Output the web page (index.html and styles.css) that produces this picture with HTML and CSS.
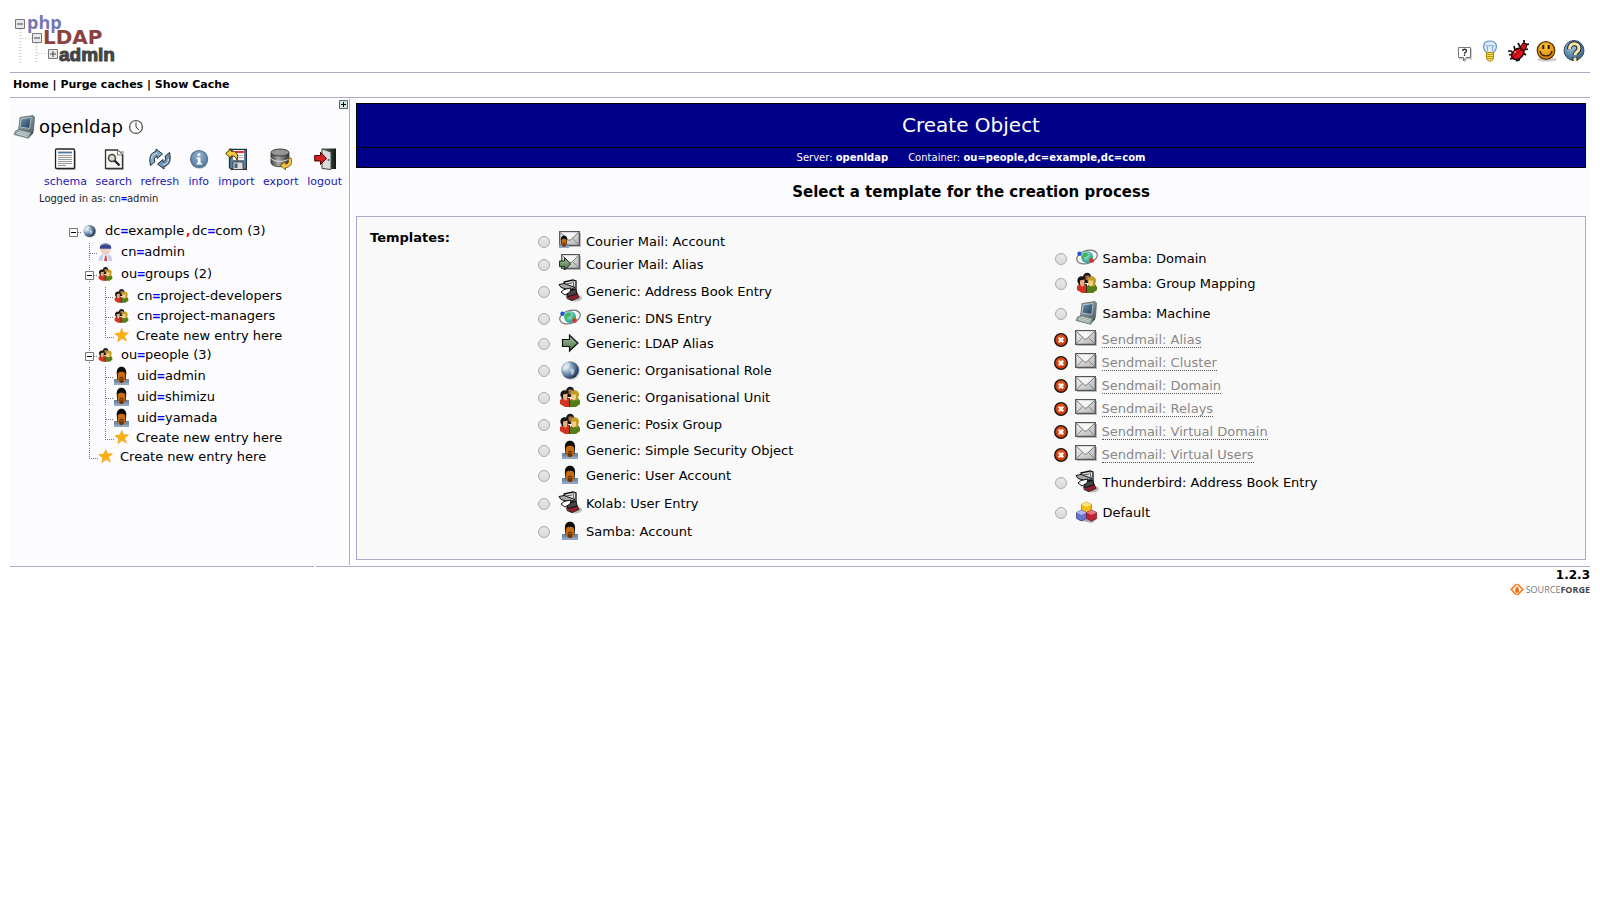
FILE: index.html
```html
<!DOCTYPE html>
<html lang="en">
<head>
<meta charset="utf-8">
<title>phpLDAPadmin</title>
<link rel="stylesheet" href="styles.css">
</head>
<body>
<svg class="defs" aria-hidden="true">
  <defs>
    <linearGradient id="g-steel" x1="0" y1="0" x2="1" y2="1"><stop offset="0" stop-color="#f4f4f4"/><stop offset="1" stop-color="#b4b4b4"/></linearGradient>
    <linearGradient id="g-green" x1="0" y1="0" x2="0" y2="1"><stop offset="0" stop-color="#a9c7a3"/><stop offset="1" stop-color="#456b42"/></linearGradient>
    <linearGradient id="g-screen" x1="0" y1="0" x2="1" y2="1"><stop offset="0" stop-color="#6c93b4"/><stop offset="1" stop-color="#1d3c58"/></linearGradient>
    <linearGradient id="g-case" x1="0" y1="0" x2="1" y2="1"><stop offset="0" stop-color="#a9b8ba"/><stop offset="1" stop-color="#4c5c60"/></linearGradient>
    <radialGradient id="g-globe" cx=".3" cy=".35" r=".75"><stop offset="0" stop-color="#e8f1f6"/><stop offset=".45" stop-color="#7f9dba"/><stop offset="1" stop-color="#16294a"/></radialGradient>
    <radialGradient id="g-smile" cx=".45" cy=".3" r=".7"><stop offset="0" stop-color="#ffc93d"/><stop offset="1" stop-color="#d07a00"/></radialGradient>
    <radialGradient id="g-help" cx=".4" cy=".3" r=".8"><stop offset="0" stop-color="#a9cbe4"/><stop offset="1" stop-color="#2c5478"/></radialGradient>
    <radialGradient id="g-dns" cx=".4" cy=".35" r=".7"><stop offset="0" stop-color="#a8f2d8"/><stop offset="1" stop-color="#18909a"/></radialGradient>
    <radialGradient id="g-err" cx=".5" cy=".4" r=".6"><stop offset="0" stop-color="#f2602a"/><stop offset="1" stop-color="#c23200"/></radialGradient>
    <radialGradient id="g-info" cx=".5" cy=".3" r=".8"><stop offset="0" stop-color="#8fb0d0"/><stop offset="1" stop-color="#4b749e"/></radialGradient>
    <linearGradient id="g-disk" x1="0" y1="0" x2="1" y2="0"><stop offset="0" stop-color="#444"/><stop offset=".4" stop-color="#a5a5a5"/><stop offset="1" stop-color="#333"/></linearGradient>
    <linearGradient id="g-door" x1="0" y1="0" x2="1" y2="0"><stop offset="0" stop-color="#5d7160"/><stop offset="1" stop-color="#101a12"/></linearGradient>
  </defs>

  <symbol id="i-computer" viewBox="0 0 24 24">
    <path d="M7 2.500 20 .5l1.500 1.500L20.500 15 17 19 5.500 15.500z" fill="url(#g-case)" stroke="#4d5b5e" stroke-width=".7"/>
    <path d="M8.200 4 18 2.500 16.700 13.500 7 12z" fill="url(#g-screen)" stroke="#c0cccd" stroke-width=".8"/>
    <path d="M2.500 16 6 14.500 18.500 17.500 15.500 23.300 1 19.500z" fill="#93a3a3" stroke="#59686a" stroke-width=".7"/>
    <path d="M4 17.200 15 20M3.500 18.500 14 21.500M6 16 16 18.500" stroke="#dce4e3" stroke-width=".7"/>
    <path d="M18.500 17.500 21 14.500 20 18.500 15.500 23.300z" fill="#3e4b4e"/>
  </symbol>
  <symbol id="i-clock" viewBox="0 0 16 16"><circle cx="8" cy="8" r="6.500" fill="#fff" stroke="#555" stroke-width="1.200"/><path d="M8 3.500V8l3 3.200" fill="none" stroke="#333"/><path d="M8 2v1M8 13v1M2 8h1M13 8h1" stroke="#888"/></symbol>
  <symbol id="i-schema" viewBox="0 0 22 22"><path d="M3 3h19v19H3z" fill="#bbb"/><rect x="1.500" y="1" width="19" height="19.500" rx="1" fill="#fafafa" stroke="#222" stroke-width="1.300"/><path d="M4 4.500h14" stroke="#4e76a0" stroke-width="1.800"/><path d="M4 7.500h14M4 9.500h14M4 11.500h14M4 13.500h14M4 15.500h14M4 17.500h8" stroke="#999"/></symbol>
  <symbol id="i-search" viewBox="0 0 22 22"><path d="M4 3h17v19H4z" fill="#bbb"/><path d="M2.500 2h12l5 5v13.500h-17z" fill="#f7f7f4" stroke="#333" stroke-width="1.300"/><path d="M14.500 2v5h5" fill="#fff" stroke="#555" stroke-width=".8"/><circle cx="9" cy="10" r="3.500" fill="#d9dfcc" stroke="#444" stroke-width="1.500"/><path d="m11.500 12.500 5 5" stroke="#222" stroke-width="2.300"/></symbol>
  <symbol id="i-refresh" viewBox="0 0 22 22"><path d="M1.500 17.500C-.5 9 2 4.500 7 3.500V1l6.500 5L8 10.500V7.800C5.500 8.500 5 11 5.800 14z" fill="#86a9c5" stroke="#1e2e3c"/><path d="M20.500 4.500c2 8.500-.5 13-5.500 14V21l-6.500-5 5.500-4.500v2.700c2.500-.7 3-3.200 2.200-6.200z" fill="#7196b5" stroke="#1e2e3c"/><path d="M2.500 11C3 7 5.500 5.500 8 5.200M19.500 11c-.5 4-3 5.500-5.500 5.800" fill="none" stroke="#d6e6f2"/></symbol>
  <symbol id="i-info" viewBox="0 0 22 22"><circle cx="11.500" cy="12" r="8.800" fill="#bbb"/><circle cx="11" cy="11" r="8.500" fill="url(#g-info)" stroke="#56718c" stroke-width="1.200"/><circle cx="11" cy="6.500" r="1.500" fill="#fff"/><path d="M8.500 9.500h4v5.500H14v1.500H8.500V15h1.300v-4H8.500z" fill="#fff"/></symbol>
  <symbol id="i-import" viewBox="0 0 22 22"><path d="M4.500 1.500h17v20h-15l-2-2z" fill="#5f7f9c" stroke="#22303d" stroke-width="1.300"/><path d="M8 2h11v10H8z" fill="#f7f4ef"/><path d="M10 4h9" stroke="#d33" stroke-width="2"/><path d="M10 7.500h8M10 9.500h8" stroke="#bbb"/><path d="M8 14h10v7.500H8z" fill="#dcdcdc" stroke="#333" stroke-width=".8"/><path d="M9.500 15.500h3V20h-3z" fill="#44607b"/><path d="M.7 5.500 6 .7v2.500c5-.5 8 3 6 9.300-1-4-3-4.800-6-4.500v2.500z" fill="#f5c842" stroke="#403000"/></symbol>
  <symbol id="i-export" viewBox="0 0 22 22"><path d="M1 5v10c1.500 5 16.500 5 18 0V5z" fill="url(#g-disk)" stroke="#333" stroke-width=".8"/><ellipse cx="10" cy="4.500" rx="9" ry="3.500" fill="#959595" stroke="#333" stroke-width=".9"/><path d="M1 10c1.500 4.500 16.500 4.500 18 0" fill="none" stroke="#e5e5e5"/><path d="M21 10c2 5.500-1 9.500-5.500 9.500V22l-5-4.500 5-4v2.700c3 0 3.500-2.500 2.500-5.500z" fill="#f5cb45" stroke="#5f4600" stroke-width=".8"/></symbol>
  <symbol id="i-logout" viewBox="0 0 22 22"><path d="M8 .5h14v20.500H8z" fill="url(#g-door)"/><path d="M8 .8 17 4v17.500l-9-1z" fill="#dadada" stroke="#444"/><path d="M.7 7.500h5.800V4.200l6 6.300-6 6V13H.7z" fill="#d2201a" stroke="#400500"/><circle cx="14.500" cy="12" r="1" fill="#555"/></symbol>

  <symbol id="i-hint" viewBox="0 0 22 22"><path d="M8 8.500h13v11h-5l-3 4v-4H8z" fill="#ccc"/><path d="M7.500 7.500h12v10h-4.500l-2.500 3.500v-3.500h-5z" fill="#fff" stroke="#777"/><path d="M11.500 11c0-2.300 4-2.300 4-.3 0 1.500-2 1.300-2 3M13.500 14.500V16" fill="none" stroke="#222" stroke-width="1.300"/></symbol>
  <symbol id="i-bulb" viewBox="0 0 22 22"><path d="M7.500 12.500C3 8 3.500 1 11 1s8 7 3.500 11.500z" fill="#dcebfb" stroke="#5f8bc4" stroke-width="1.200"/><path d="M8.500 11V7L7 5.500l2 .7L11 5l2 1.200 2-.7L13.500 7v4" fill="none" stroke="#7ea6d9"/><path d="M7.500 12.500h7v6l-2 2.500h-3l-2-2.500z" fill="#ffe164" stroke="#a98600"/><path d="M7.500 14.500h7M7.500 16.500h7M8 18.500h6" stroke="#b89500"/></symbol>
  <symbol id="i-bug" viewBox="0 0 22 22"><path d="M1 11h3l2 2M7 6l1 4M2 15l4-1M3 19l4-1M9 21l3-1 1-3M19 15l-3-2M21 9l-5 1M11 3l2 4M17 0v4M22 4l-4 1" fill="none" stroke="#111" stroke-width="1.700"/><path d="M5 18C3 13 9 8 13 8l4 3c0 6-7 11-12 7z" fill="#e2101b" stroke="#220000" stroke-width="1.400"/><path d="m13 7 3-4 4 1-1 4-3 3z" fill="#d3101a" stroke="#220000"/><path d="m6 17 8-7" stroke="#500"/><circle cx="8" cy="12" r="1" fill="#ff9090"/></symbol>
  <symbol id="i-smile" viewBox="0 0 22 22"><ellipse cx="12" cy="19.500" rx="10" ry="2" fill="#ccc"/><circle cx="11" cy="10.500" r="8.800" fill="url(#g-smile)" stroke="#543300" stroke-width="1.200"/><path d="M8.300 5v4M13.700 5v4" stroke="#2a1b00" stroke-width="2"/><path d="M5 11c1 6.500 11 6.500 12 0" fill="none" stroke="#2a1b00" stroke-width="1.400"/></symbol>
  <symbol id="i-help" viewBox="0 0 22 22"><circle cx="11" cy="10.500" r="10" fill="url(#g-help)" stroke="#304e68"/><path d="M6.500 9c-.5-7 10-7 9.500-.5 0 3.500-4 3.500-4 6.500M12 17v4" fill="none" stroke="#18202a" stroke-width="5"/><path d="M6.500 9c-.5-7 10-7 9.500-.5 0 3.500-4 3.500-4 6.500M12 17.500v3.500" fill="none" stroke="#f8e6a9" stroke-width="3"/></symbol>

  <symbol id="i-mail" viewBox="0 0 22 22"><path d="M2 3h20v14H2z" fill="#bbb"/><path d="M.7 1.700h19.600v13.600H.7z" fill="url(#g-steel)" stroke="#555" stroke-width="1.300"/><path d="m1.500 14.500 6-6M19.500 14.500l-6-6" stroke="#888"/><path d="m1.500 2.500 8 7.500h2l8-7.500" fill="#f5f5f5" stroke="#777"/></symbol>
  <symbol id="i-arrow" viewBox="0 0 22 22"><path d="M3.500 7.500h7V3.200L19 11l-8.500 8v-4.500h-7z" fill="url(#g-green)" stroke="#111" stroke-width="1.200"/></symbol>
  <symbol id="i-user" viewBox="0 0 22 22"><path d="M3 20v-6h16v6z" fill="#6d8aae"/><path d="M3 20v-2.500h16V20z" fill="#8da7c5"/><path d="M6 9C4.500-.8 17.500-.8 16 9l-.5 6h-9z" fill="#0b0b0b"/><path d="M7 8.500C7.500 6 14.500 6 15 8.500V15l-2 3H9l-2-3z" fill="#c46c14"/><path d="M8.700 13.500c0-2.200 4.600-2.200 4.600 0v2.700L12 18h-2l-1.300-1.800z" fill="#6a3507"/><path d="M9.500 13.800h3" stroke="#b86415"/></symbol>
  <symbol id="i-mail-user" viewBox="0 0 22 22"><use href="#i-mail" width="22" height="22"/><svg x="0" y="5" width="10" height="13" viewBox="3 1 16 19" preserveAspectRatio="none"><use href="#i-user" width="22" height="22"/></svg></symbol>
  <symbol id="i-mail-arrow" viewBox="0 0 22 22"><path d="M4 3h18v14H4z" fill="#bbb"/><path d="M2.700 1.700h17.600v13.600H2.700z" fill="url(#g-steel)" stroke="#555" stroke-width="1.300"/><path d="M19.500 14.500l-6-6" stroke="#888"/><path d="m3.500 2.500 7 7h2l7-7" fill="#f5f5f5" stroke="#777"/><path d="M.6 8h5V4.800l6 6.200-6 6v-3.300h-5z" fill="url(#g-green)" stroke="#182018"/></symbol>
  <symbol id="i-book" viewBox="0 0 24 24"><ellipse cx="17" cy="19" rx="7" ry="3.500" fill="#bbb"/><path d="m9 16 10-2 2 4.500-7 3-5-2z" fill="#8e1d34" stroke="#321"/><path d="m8 13 10-3 1 5-9 2.500z" fill="#444" stroke="#111"/><path d="m6 3 9-2 3 1v8l-9 2z" fill="#e5e5e5" stroke="#111" stroke-width="1.300"/><path d="m1 5.500 5-1 11 4-5 2.500-9-2.500z" fill="#a5aaaa" stroke="#111"/><path d="m3 13 3-2.500 7-1.500-1 4-5 3z" fill="#fff" stroke="#111"/><path d="m15 2 1 6M8 5l6-1M8 17l3 3" fill="none" stroke="#555"/></symbol>
  <symbol id="i-dns" viewBox="0 0 22 22"><circle cx="11" cy="10" r="6" fill="url(#g-dns)"/><path d="M7 7c2-3 4-1 5 0s-1 3-3 3 0 3-1 4c-2-2-3-4-1-7zM14 9c2 0 3 2 1 5-2 0-3-3-1-5z" fill="#48b457"/><ellipse cx="11" cy="10" rx="10.500" ry="6.500" transform="rotate(-17 11 10)" fill="none" stroke="#777" stroke-width="1.200"/><circle cx="3.500" cy="6.800" r="2.200" fill="#1f55d0"/><circle cx="15.700" cy="13.500" r="2.300" fill="#d93030"/></symbol>
  <symbol id="i-globe" viewBox="0 0 22 22"><circle cx="12" cy="12" r="9" fill="#ccc"/><circle cx="11" cy="11" r="8.800" fill="url(#g-globe)"/><path d="M5 6c3-4 5-3 6-1s-1 2-2 4-4 1-4 4c-2-2-2-5 0-7zM12 10c3-1 4 1 3 4s-3 2-3 0-2-3 0-4z" fill="#e6eef0" opacity=".6"/></symbol>
  <symbol id="i-people" viewBox="0 0 22 22"><path d="M7 7C6-1 16-1 15 6l-2 5H8z" fill="#16181a"/><path d="M9.500 3.500h4V8h-4z" fill="#a97145"/><path d="M1 18v-4l3-2h6l2 3v6H6z" fill="#d03524"/><path d="M1.500 9.500C.5 3 9.500 2.500 9.500 8L9 13H3z" fill="#1c1310"/><path d="M4 8.500 8.500 7.500v4c0 3.500-3.500 4-4.500.5z" fill="#e8ad80"/><path d="M11 21v-7l3-2h5l2 3v3l-4 3z" fill="#567e18"/><path d="M11.500 8.500C11.500 2.500 20.500 3 20 9l-1.500 5.500-5-1z" fill="#c29a28"/><path d="M12.500 8.500H17V12c-1 3.500-3.500 3-4.500 0z" fill="#f6ce87"/><path d="M10.500 12v9" stroke="#3c2c16"/></symbol>
  <symbol id="i-cubes" viewBox="0 0 22 22"><path d="m2 19 8-3 12 1-6 5z" fill="#aaa"/><path d="m10.500 1 5 2.500v6l-5 2.500-5-2.500v-6z" fill="#f8bd16" stroke="#a47900" stroke-width=".7"/><path d="m10.500 1 5 2.500-5 2.500-5-2.500z" fill="#ffe47b"/><path d="m5.500 9 5 2.500v6l-5 2.500-5-2.500v-6z" fill="#6b72cf" stroke="#353a86" stroke-width=".7"/><path d="m5.500 9 5 2.500-5 2.500-5-2.500z" fill="#b3b8f6"/><path d="m15.500 9 5 2.500v6l-5 2.500-5-2.500v-6z" fill="#bd2535" stroke="#6d101a" stroke-width=".7"/><path d="m15.500 9 5 2.500-5 2.500-5-2.500z" fill="#e87880"/></symbol>
  <symbol id="i-error" viewBox="0 0 14 14"><circle cx="7" cy="7" r="6.300" fill="url(#g-err)" stroke="#16110f" stroke-width="1.300"/><path d="m4.800 4.800 4.400 4.400M9.200 4.800 4.800 9.200" stroke="#fff" stroke-width="2.200"/></symbol>
  <symbol id="i-star" viewBox="0 0 16 16"><path d="m8.300.8 1.900 4.900 5.300-.2-4.200 3.700 2.200 5.300-4.700-2.700L4 15.300l1-5.200L.8 6.500l5.400-.6z" fill="#fbb012" stroke="#e89b0b" stroke-width=".5"/></symbol>
  <symbol id="i-admin" viewBox="0 0 16 20"><path d="M1 20c0-6 2-7 7-7s7 1 7 7z" fill="#c7d3ec"/><path d="m6 13 2 2 2-2 1 7H5z" fill="#fff"/><path d="m7.500 14.500h1.500l.8 5.500H6.500z" fill="#d54245"/><circle cx="8" cy="8" r="5.300" fill="#f2cfbf"/><path d="M2 5.500C2 0 14 0 14 5.500V7H2z" fill="#39438e"/><path d="M3 3.500c2-2 8-2 10 0" fill="none" stroke="#8c96ce"/></symbol>

  <symbol id="t-line" viewBox="0 0 16 18"><path d="M7.500 0v18" stroke="#777" stroke-dasharray="1 1"/></symbol>
  <symbol id="t-tee" viewBox="0 0 16 18"><path d="M7.500 0v18M8 10.500h8" stroke="#777" stroke-dasharray="1 1"/></symbol>
  <symbol id="t-end" viewBox="0 0 16 18"><path d="M7.500 0v10M7 10.500h9" stroke="#777" stroke-dasharray="1 1"/></symbol>
  <symbol id="t-root" viewBox="0 0 16 18"><path d="M12 10.500h4" stroke="#777" stroke-dasharray="1 1"/><path d="M3.500 6.500h8v8h-8z" fill="#fff" stroke="#777"/><path d="M5 10.500h5" stroke="#000"/></symbol>
  <symbol id="t-minus" viewBox="0 0 16 18"><path d="M7.500 0v18M12 10.500h4" stroke="#777" stroke-dasharray="1 1"/><path d="M3.500 6.500h8v8h-8z" fill="#fff" stroke="#777"/><path d="M5 10.500h5" stroke="#000"/></symbol>
</svg>

<header class="head">
  <a href="#" aria-label="phpLDAPadmin">
    <svg class="logo" viewBox="0 0 104 50">
      <g fill="none" stroke="#ccc" stroke-width="2" stroke-dasharray="1 2"><path d="M10.500 15v34M26.500 29v20"/><path stroke-width="1" d="M12 24.500h10M28 39.500h10"/></g>
      <g fill="#e8e8e8" stroke="#777"><path d="M5.500 5.500h9v9h-9zM22.500 19.500h9v9h-9zM38.500 35.500h9v9h-9z"/><path stroke="#444" d="M7 10h6M24 24h6M40 40h6M43 37v6"/></g>
      <text class="logo-php" x="17" y="15">php</text>
      <text class="logo-ldap" x="33" y="30">LDAP</text>
      <text class="logo-admin" x="49" y="47">admin</text>
    </svg>
  </a>
  <nav class="head-icons">
    <a href="#" title="Hint"><svg><use href="#i-hint"/></svg></a>
    <a href="#" title="Request feature"><svg><use href="#i-bulb"/></svg></a>
    <a href="#" title="Report a bug"><svg><use href="#i-bug"/></svg></a>
    <a href="#" title="Donate"><svg><use href="#i-smile"/></svg></a>
    <a href="#" title="Help"><svg><use href="#i-help"/></svg></a>
  </nav>
</header>

<nav class="menu"><a href="#">Home</a> | <a href="#">Purge caches</a> | <a href="#">Show Cache</a></nav>

<div class="page">
  <aside class="side">
    <button class="expand" type="button" aria-label="Expand tree"><svg viewBox="0 0 9 9"><path d="M.5.500h8v8h-8z" fill="#d5e2e2" stroke="#567"/><path d="M2 4.500h5M4.500 2v5" stroke="#000"/></svg></button>
    <h2 class="server"><svg class="ic24"><use href="#i-computer"/></svg>openldap<svg class="clock"><use href="#i-clock"/></svg></h2>
    <nav class="tools">
      <a href="#"><svg><use href="#i-schema"/></svg>schema</a>
      <a href="#"><svg><use href="#i-search"/></svg>search</a>
      <a href="#"><svg><use href="#i-refresh"/></svg>refresh</a>
      <a href="#"><svg><use href="#i-info"/></svg>info</a>
      <a href="#"><svg><use href="#i-import"/></svg>import</a>
      <a href="#"><svg><use href="#i-export"/></svg>export</a>
      <a href="#"><svg><use href="#i-logout"/></svg>logout</a>
    </nav>
    <p class="login">Logged in as: <a href="#">cn<b class="eq">=</b>admin</a></p>
    <ul class="tree">
      <li><svg class="br"><use href="#t-root"/></svg><svg class="ic16"><use href="#i-globe"/></svg><a href="#">dc<b class="eq">=</b>example<b class="comma">,</b>dc<b class="eq">=</b>com (3)</a></li>
      <li class="person l2"><svg class="br"><use href="#t-tee"/></svg><svg class="ic-admin"><use href="#i-admin"/></svg><a href="#">cn<b class="eq">=</b>admin</a></li>
      <li class="tall l2"><svg class="br"><use href="#t-minus"/></svg><svg class="ic16"><use href="#i-people"/></svg><a href="#">ou<b class="eq">=</b>groups (2)</a></li>
      <li class="l2"><svg class="br"><use href="#t-line"/></svg><svg class="br"><use href="#t-tee"/></svg><svg class="ic16"><use href="#i-people"/></svg><a href="#">cn<b class="eq">=</b>project-developers</a></li>
      <li class="l2"><svg class="br"><use href="#t-line"/></svg><svg class="br"><use href="#t-tee"/></svg><svg class="ic16"><use href="#i-people"/></svg><a href="#">cn<b class="eq">=</b>project-managers</a></li>
      <li class="new l2"><svg class="br"><use href="#t-line"/></svg><svg class="br"><use href="#t-end"/></svg><svg class="ic16"><use href="#i-star"/></svg><a href="#">Create new entry here</a></li>
      <li class="l2"><svg class="br"><use href="#t-minus"/></svg><svg class="ic16"><use href="#i-people"/></svg><a href="#">ou<b class="eq">=</b>people (3)</a></li>
      <li class="person l2"><svg class="br"><use href="#t-line"/></svg><svg class="br"><use href="#t-tee"/></svg><svg class="ic-user" viewBox="3 1 16 19" preserveAspectRatio="none"><use href="#i-user" width="22" height="22"/></svg><a href="#">uid<b class="eq">=</b>admin</a></li>
      <li class="person l2"><svg class="br"><use href="#t-line"/></svg><svg class="br"><use href="#t-tee"/></svg><svg class="ic-user" viewBox="3 1 16 19" preserveAspectRatio="none"><use href="#i-user" width="22" height="22"/></svg><a href="#">uid<b class="eq">=</b>shimizu</a></li>
      <li class="person l2"><svg class="br"><use href="#t-line"/></svg><svg class="br"><use href="#t-tee"/></svg><svg class="ic-user" viewBox="3 1 16 19" preserveAspectRatio="none"><use href="#i-user" width="22" height="22"/></svg><a href="#">uid<b class="eq">=</b>yamada</a></li>
      <li class="new l2"><svg class="br"><use href="#t-line"/></svg><svg class="br"><use href="#t-end"/></svg><svg class="ic16"><use href="#i-star"/></svg><a href="#">Create new entry here</a></li>
      <li class="new l2"><svg class="br"><use href="#t-end"/></svg><svg class="ic16"><use href="#i-star"/></svg><a href="#">Create new entry here</a></li>
    </ul>
  </aside>

  <main class="main">
    <h1 class="title">Create Object</h1>
    <p class="subtitle"><span>Server: <b>openldap</b></span><span>Container: <b>ou=people,dc=example,dc=com</b></span></p>
    <h2 class="prompt">Select a template for the creation process</h2>
    <form class="templates">
      <h3>Templates:</h3>
      <div class="col">
        <label class="row r-mail"><input type="radio" name="template"><svg><use href="#i-mail-user"/></svg>Courier Mail: Account</label>
        <label class="row r-mail"><input type="radio" name="template"><svg><use href="#i-mail-arrow"/></svg>Courier Mail: Alias</label>
        <label class="row r-tall"><input type="radio" name="template"><svg><use href="#i-book"/></svg>Generic: Address Book Entry</label>
        <label class="row r-mail"><input type="radio" name="template"><svg><use href="#i-dns"/></svg>Generic: DNS Entry</label>
        <label class="row"><input type="radio" name="template"><svg><use href="#i-arrow"/></svg>Generic: LDAP Alias</label>
        <label class="row"><input type="radio" name="template"><svg><use href="#i-globe"/></svg>Generic: Organisational Role</label>
        <label class="row"><input type="radio" name="template"><svg><use href="#i-people"/></svg>Generic: Organisational Unit</label>
        <label class="row"><input type="radio" name="template"><svg><use href="#i-people"/></svg>Generic: Posix Group</label>
        <label class="row r-user"><input type="radio" name="template"><svg><use href="#i-user"/></svg>Generic: Simple Security Object</label>
        <label class="row r-user"><input type="radio" name="template"><svg><use href="#i-user"/></svg>Generic: User Account</label>
        <label class="row r-tall"><input type="radio" name="template"><svg><use href="#i-book"/></svg>Kolab: User Entry</label>
        <label class="row r-user"><input type="radio" name="template"><svg><use href="#i-user"/></svg>Samba: Account</label>
      </div>
      <div class="col">
        <label class="row r-mail"><input type="radio" name="template"><svg><use href="#i-dns"/></svg>Samba: Domain</label>
        <label class="row r-group"><input type="radio" name="template"><svg><use href="#i-people"/></svg>Samba: Group Mapping</label>
        <label class="row r-tall"><input type="radio" name="template"><svg><use href="#i-computer"/></svg>Samba: Machine</label>
        <div class="row r-mail off"><svg class="err"><use href="#i-error"/></svg><svg><use href="#i-mail"/></svg><span>Sendmail: Alias</span></div>
        <div class="row r-mail off"><svg class="err"><use href="#i-error"/></svg><svg><use href="#i-mail"/></svg><span>Sendmail: Cluster</span></div>
        <div class="row r-mail off"><svg class="err"><use href="#i-error"/></svg><svg><use href="#i-mail"/></svg><span>Sendmail: Domain</span></div>
        <div class="row r-mail off"><svg class="err"><use href="#i-error"/></svg><svg><use href="#i-mail"/></svg><span>Sendmail: Relays</span></div>
        <div class="row r-mail off"><svg class="err"><use href="#i-error"/></svg><svg><use href="#i-mail"/></svg><span>Sendmail: Virtual Domain</span></div>
        <div class="row r-mail off"><svg class="err"><use href="#i-error"/></svg><svg><use href="#i-mail"/></svg><span>Sendmail: Virtual Users</span></div>
        <label class="row r-tall"><input type="radio" name="template"><svg><use href="#i-book"/></svg>Thunderbird: Address Book Entry</label>
        <label class="row r-cubes"><input type="radio" name="template"><svg><use href="#i-cubes"/></svg>Default</label>
      </div>
    </form>
  </main>
</div>

<footer class="foot">
  <div class="foot-left"></div>
  <div class="foot-right">
    <b class="version">1.2.3</b>
    <a class="sf" href="#"><svg viewBox="0 0 14 13"><path d="M6.500 1 1.300 6.500l5.200 5.500M7.500 1l5.200 5.500L7.500 12" fill="none" stroke="#f58220" stroke-width="1.800"/><path d="M7 3c3 3 2.500 7 0 7S4.500 6.500 7 3z" fill="#f36f21"/></svg><span>SOURCE<b>FORGE</b></span></a>
  </div>
</footer>
</body>
</html>
```
FILE: styles.css
```css
* { box-sizing: border-box; }
body {
  margin: 0 10px;
  background: #fff;
  color: #000;
  font: 13px/16px "DejaVu Sans", Verdana, sans-serif;
}
a { color: inherit; text-decoration: none; }
h1, h2, h3, p, ul { margin: 0; padding: 0; font-weight: normal; }
svg { display: block; flex: none; overflow: visible; }
.defs { position: absolute; width: 0; height: 0; }

.head {
  display: flex;
  justify-content: space-between;
  align-items: flex-end;
  padding: 14px 5px 8px 0;
  border-bottom: 1px solid #aaaacc;
}
.logo { width: 104px; height: 50px; }
.logo-php { font: bold 18px "Open Sans", sans-serif; fill: #7676b4; }
.logo-ldap { font: bold 20px "DejaVu Sans", sans-serif; fill: #8c4040; }
.logo-admin { font: bold 19px "Liberation Sans", Arial, sans-serif; fill: #444; stroke: #444; stroke-width: 1px; }
.head-icons { display: flex; gap: 6px; padding-bottom: 2px; }
.head-icons svg { width: 22px; height: 22px; }

.menu {
  padding: 4px 3px;
  border-bottom: 1px solid #aaaacc;
  font-weight: bold;
  font-size: 11px;
}

.page { display: flex; gap: 2px; padding: 1px 0; }
.side {
  position: relative;
  flex: 0 0 340px;
  padding-top: 16px;
  background: #fcfcfe;
  border-right: 1px solid #aaaacc;
}
.expand {
  position: absolute;
  top: 1px;
  right: 1px;
  width: 9px;
  height: 9px;
  padding: 0;
  border: 0;
  background: none;
}
.server { display: flex; align-items: center; padding-left: 3px; font-size: 18px; line-height: 24px; }
.ic24 { width: 24px; height: 24px; margin-right: 2px; }
.clock { width: 16px; height: 16px; margin-left: 5px; }
.ic16 { width: 15px; height: 16px; margin: 0 1px 1px 0; }
.tools {
  display: flex;
  justify-content: space-between;
  padding: 9px 7px 0 34px;
  font-size: 11px;
  color: #1a1ab0;
}
.tools a { display: flex; flex-direction: column; align-items: center; gap: 4px; }
.tools svg { width: 22px; height: 22px; }
.login { padding: 1px 0 0 29px; font-size: 10px; color: #222; }
.eq, .comma { font-family: "DejaVu Sans Mono", monospace; }
.eq { color: #00f; }
.comma { color: #f00; }

.tree { padding: 14px 0 0 56px; list-style: none; }
.tree li { display: flex; align-items: center; height: 20px; }
.tree .l2 { padding-left: 16px; }
.tree .person { height: 21px; }
.tree .tall { height: 24px; }
.tree .new { height: 19px; }
.tree a { padding-left: 7px; }
.tree .new a { padding-left: 6px; }
.br { width: 16px; height: 18px; }
.ic-admin, .ic-user { width: 15px; height: 19px; margin-right: 1px; }

.main { flex: 1; padding: 4px 4px 5px; background: #fcfcfe; }
.title, .subtitle { border: 1px solid #000; background: #000088; color: #fff; text-align: center; }
.title { font-size: 20px; line-height: 43px; }
.subtitle { display: flex; justify-content: center; gap: 20px; border-top: 0; font-size: 10px; line-height: 19px; }
.prompt { padding: 14px 0; font-size: 15px; font-weight: bold; line-height: 20px; text-align: center; }
.templates {
  display: grid;
  grid-template-columns: 167px 1fr 1fr;
  align-items: center;
  padding: 13px 15px 15px 13px;
  border: 1px solid #aaaacc;
  background: #f9f9f9;
}
.templates h3 { align-self: start; font-size: 13px; font-weight: bold; }
.row { display: flex; align-items: center; height: 27px; }
.r-mail { height: 23px; }
.r-tall { height: 31px; }
.r-user { height: 25px; }
.r-cubes { height: 29px; }
.r-group { height: 28px; }
.row svg { width: 22px; height: 22px; margin: 0 5px 2px 8px; }
.r-tall svg { width: 24px; height: 24px; margin: 0 4px 2px 7px; }
.row .err { width: 14px; height: 14px; margin: 0 0 2px; }
.row .err + svg { margin-left: 7px; }
.row input {
  appearance: none;
  flex: none;
  width: 12px;
  height: 12px;
  margin: 0 1px;
  border: 1px solid #aaa;
  border-radius: 50%;
  background: linear-gradient(#e8e8e8, #dadada);
}
.row input:checked { background: #446; }
.off span { border-bottom: 1px dotted #555; color: #888; line-height: 14px; }

.foot { display: flex; gap: 2px; }
.foot-left { flex: 0 0 304px; border-top: 1px solid #aaaacc; }
.foot-right {
  display: flex;
  flex: 1;
  flex-direction: column;
  align-items: flex-end;
  border-top: 1px solid #aaaacc;
}
.version { font-size: 12px; }
.sf { display: flex; align-items: center; gap: 2px; color: #777; font: 9px/13px "Open Sans", sans-serif; }
.sf b { color: #444; }
.sf svg { width: 14px; height: 13px; }
```
